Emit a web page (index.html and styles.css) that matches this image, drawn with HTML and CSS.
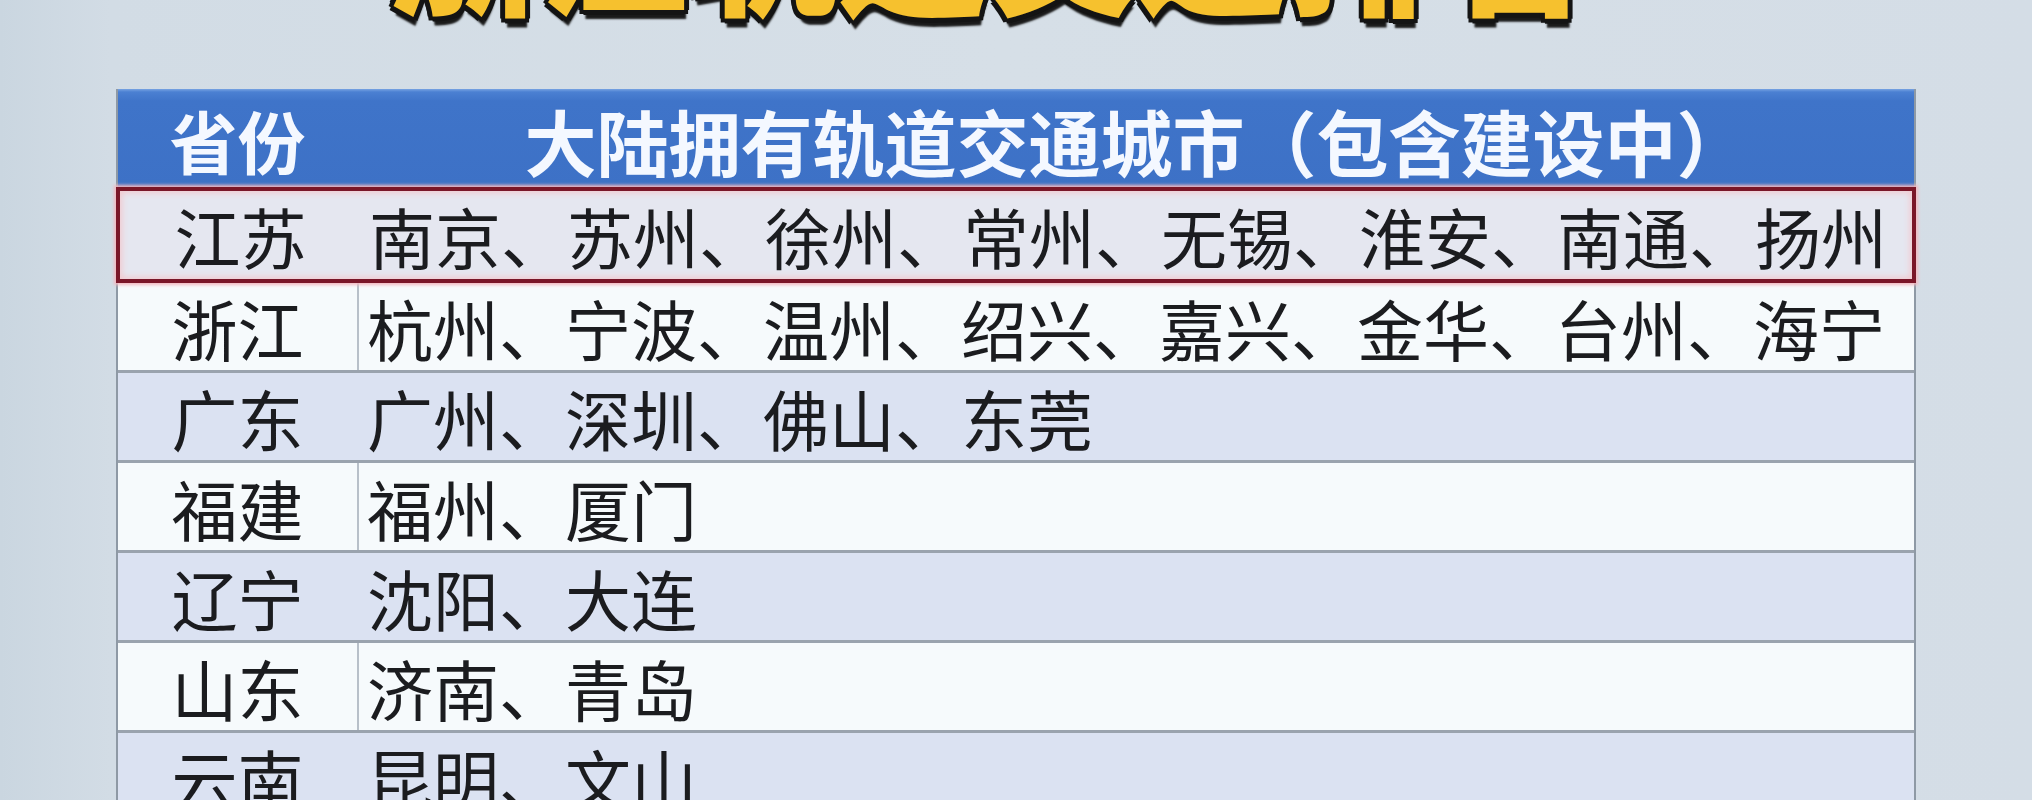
FILE: index.html
```html
<!DOCTYPE html>
<html lang="zh-CN">
<head>
<meta charset="utf-8">
<title>大陆拥有轨道交通城市</title>
<link rel="stylesheet" href="styles.css">
</head>
<body>
<div class="page">
  <div class="title-band">
    <div class="title">浙江轨道交通排名</div>
  </div>
  <div class="table">
    <div class="row head">
      <div class="cell prov">省份</div>
      <div class="cell cities">大陆拥有轨道交通城市（包含建设中）</div>
    </div>
    <div class="row hl">
      <div class="cell prov">江苏</div>
      <div class="cell cities">南京、苏州、徐州、常州、无锡、淮安、南通、扬州</div>
    </div>
    <div class="row light">
      <div class="cell prov">浙江</div>
      <div class="cell cities">杭州、宁波、温州、绍兴、嘉兴、金华、台州、海宁</div>
    </div>
    <div class="row tint">
      <div class="cell prov">广东</div>
      <div class="cell cities">广州、深圳、佛山、东莞</div>
    </div>
    <div class="row light">
      <div class="cell prov">福建</div>
      <div class="cell cities">福州、厦门</div>
    </div>
    <div class="row tint">
      <div class="cell prov">辽宁</div>
      <div class="cell cities">沈阳、大连</div>
    </div>
    <div class="row light">
      <div class="cell prov">山东</div>
      <div class="cell cities">济南、青岛</div>
    </div>
    <div class="row tint">
      <div class="cell prov">云南</div>
      <div class="cell cities">昆明、文山</div>
    </div>
  </div>
</div>
</body>
</html>
```

FILE: styles.css
```css
html, body {
  margin: 0;
  padding: 0;
}
body {
  width: 2032px;
  height: 800px;
  overflow: hidden;
  background: linear-gradient(90deg, #cad6e0 0px, #d2dce5 110px, #d6dfe7 1000px, #d4dde6 2032px);
  font-family: "Noto Sans CJK SC", "Noto Sans", sans-serif;
}
.page {
  display: flex;
  flex-direction: column;
}
.title-band {
  height: 89px;
  overflow: visible;
}
.title {
  margin-top: -136px;
  padding-left: 388px;
  font-size: 150px;
  line-height: 150px;
  font-weight: 900;
  color: #f6c12e;
  white-space: nowrap;
  text-shadow:
    5px 0 0 #141414, -5px 0 0 #141414, 0 5px 0 #141414, 0 -5px 0 #141414,
    4px 4px 0 #141414, -4px 4px 0 #141414, 4px -4px 0 #141414, -4px -4px 0 #141414,
    2px 9px 2px #1a1a1a;
}
.table {
  margin-left: 116px;
  width: 1796px;
  border-left: 2px solid #8e99a5;
  border-right: 2px solid #8e99a5;
  display: flex;
  flex-direction: column;
}
.row {
  display: grid;
  grid-template-columns: 241px 1fr;
  align-items: stretch;
  box-sizing: border-box;
}
.cell {
  display: flex;
  align-items: center;
  font-size: 66px;
  line-height: 1;
  color: #1b1c1f;
  white-space: nowrap;
}
.prov {
  justify-content: center;
  box-sizing: border-box;
  border-right: 2px solid transparent;
}
.cities {
  padding-left: 8px;
}
.head {
  height: 98px;
  background: linear-gradient(180deg, #77a3e2 0px, #4b80d2 3px, #3f74c9 12px, #3d71c6 100%);
}
.head .cell {
  color: #f4f8ff;
  font-weight: 700;
  font-size: 68px;
  padding-top: 4px;
}
.head .cities {
  justify-content: center;
  padding-left: 0;
  font-size: 72px;
}
.hl {
  position: relative;
  z-index: 1;
  height: 96px;
  border: 4px solid #7a1628;
  background: #e5e7f0;
  box-shadow: inset 0 0 6px 2px #f3c9cf, 0 0 3px 2px #f2b9c0;
  margin-left: -2px;
  margin-right: -2px;
}
.hl .prov {
  padding-left: 2px;
}
.light,
.tint {
  height: 90px;
  border-bottom: 3px solid #9aa3ae;
}
.light {
  background: #f6fafc;
}
.light .prov {
  border-right-color: #b8c0c9;
}
.tint {
  background: #dbe2f2;
}
```
